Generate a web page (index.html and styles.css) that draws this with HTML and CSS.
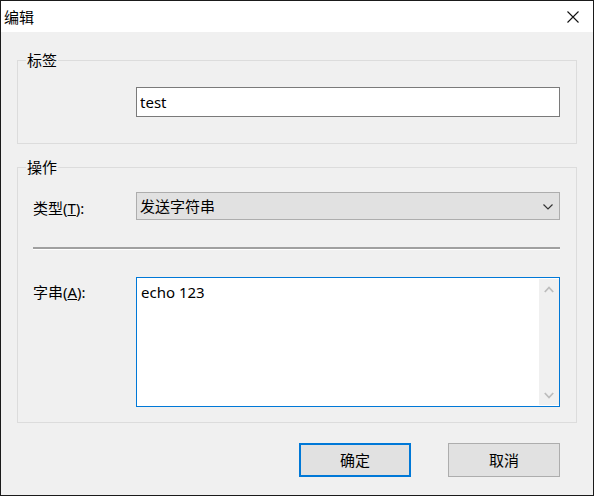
FILE: index.html
```html
<!DOCTYPE html>
<html lang="zh-CN">
<head>
<meta charset="utf-8">
<title>编辑</title>
<link rel="stylesheet" href="styles.css">
</head>
<body>
<div class="window">
  <div class="titlebar">
    <span class="title">编辑</span>
    <svg class="close" width="12" height="12" viewBox="0 0 12 12">
      <path d="M0.5 0.5 L11.5 11.5 M11.5 0.5 L0.5 11.5" stroke="#111" stroke-width="1.1" fill="none"/>
    </svg>
  </div>
  <div class="content">
    <fieldset class="group group-tag">
      <legend class="legend">标签</legend>
      <div class="group-body">
        <div class="row">
          <span class="label"></span>
          <input class="textbox" type="text" value="test">
        </div>
      </div>
    </fieldset>
    <fieldset class="group group-op">
      <legend class="legend">操作</legend>
      <div class="group-body">
        <div class="row row-combo">
          <span class="label label-combo">类型(<u>T</u>):</span>
          <div class="combo">
            <span>发送字符串</span>
            <svg width="10" height="6" viewBox="0 0 10 6">
              <path d="M0.5 0.5 L5 5 L9.5 0.5" stroke="#333" stroke-width="1.2" fill="none"/>
            </svg>
          </div>
        </div>
        <div class="separator"></div>
        <div class="row row-text">
          <span class="label label-text">字串(<u>A</u>):</span>
          <div class="memo">
            <textarea class="memo-input">echo 123</textarea>
            <div class="vscroll">
              <div class="arrow">
                <svg width="10" height="7" viewBox="0 0 10 7">
                  <path d="M0.8 6 L5 1.5 L9.2 6" stroke="#bdbdbd" stroke-width="1.8" fill="none"/>
                </svg>
              </div>
              <div class="arrow">
                <svg width="10" height="7" viewBox="0 0 10 7">
                  <path d="M0.8 1 L5 5.5 L9.2 1" stroke="#bdbdbd" stroke-width="1.8" fill="none"/>
                </svg>
              </div>
            </div>
          </div>
        </div>
      </div>
    </fieldset>
    <div class="buttons">
      <button class="btn btn-default">确定</button>
      <button class="btn">取消</button>
    </div>
  </div>
</div>
</body>
</html>
```
FILE: styles.css
```css
* { box-sizing: border-box; }

html, body {
  margin: 0;
  padding: 0;
  background: #f0f0f0;
}

body {
  font-family: "Noto Sans", "Noto Sans CJK SC", sans-serif;
  font-size: 15px;
  color: #000;
}

.window {
  width: 594px;
  height: 496px;
  border: 1px solid #1a1a1a;
  display: flex;
  flex-direction: column;
  background: #f0f0f0;
}

.titlebar {
  height: 31px;
  flex: none;
  background: #fff;
  display: flex;
  align-items: center;
  justify-content: space-between;
  padding: 0 14px 0 3px;
  line-height: 20px;
}

.close { display: block; }

.content {
  flex: 1;
  padding: 18px 16px 0 16px;
  display: flex;
  flex-direction: column;
}

.group {
  margin: 0;
  border: 1px solid #dcdcdc;
  padding: 0 16px 0 0;
  min-width: 0;
}

.group-tag { padding-top: 17px; padding-bottom: 26px; }
.group-op { margin-top: 13px; padding-top: 15px; padding-bottom: 15px; }

.legend {
  margin-left: 8px;
  padding: 0 1px;
  line-height: 20px;
}

.group-body {
  padding-left: 15px;
}

.row {
  display: grid;
  grid-template-columns: 103px 424px;
}

.label {
  line-height: 20px;
  white-space: nowrap;
}

.label-combo { align-self: center; padding-top: 3px; }
.label-text { padding-top: 5px; }

.textbox {
  height: 30px;
  border: 1px solid #7a7a7a;
  background: #fff;
  padding: 0 3px;
  font: inherit;
  color: #000;
  outline: none;
  margin: 0;
}

.combo {
  height: 28px;
  border: 1px solid #adadad;
  background: #e1e1e1;
  display: flex;
  align-items: center;
  justify-content: space-between;
  padding: 0 6px 0 3px;
  line-height: 20px;
}

.combo svg { display: block; margin-top: 1px; }

.separator {
  margin-top: 27px;
  height: 3px;
  border-top: 2px solid #a0a0a0;
  border-bottom: 1px solid #ffffff;
}

.row-text { margin-top: 27px; }

.memo {
  height: 130px;
  border: 1px solid #0078d7;
  background: #fff;
  display: flex;
}

.memo-input {
  flex: 1;
  min-width: 0;
  border: none;
  outline: none;
  resize: none;
  background: transparent;
  font: inherit;
  line-height: 20px;
  padding: 4px 4px;
  margin: 0;
  overflow: hidden;
  color: #000;
}

.vscroll {
  width: 20px;
  margin: 1px 0;
  background: #f0f0f0;
  display: flex;
  flex-direction: column;
  justify-content: space-between;
}

.arrow {
  height: 20px;
  display: flex;
  align-items: center;
  justify-content: center;
}

.arrow svg { display: block; }

.buttons {
  margin-top: 20px;
  padding-right: 17px;
  display: flex;
  justify-content: flex-end;
  gap: 37px;
}

.btn {
  width: 112px;
  height: 34px;
  margin: 0;
  border: 1px solid #adadad;
  background: #e1e1e1;
  font: inherit;
  color: #000;
  padding: 0;
  line-height: 20px;
}

.btn-default {
  border: 2px solid #0078d7;
}
```
